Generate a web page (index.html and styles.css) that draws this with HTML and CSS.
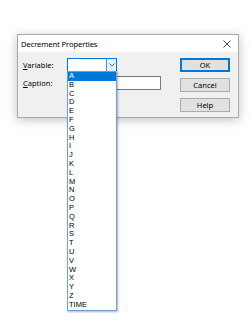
FILE: index.html
```html
<!DOCTYPE html>
<html lang="en">
<head>
    <meta charset="UTF-8">
    <title>Decrement Properties</title>
    <link rel="stylesheet" href="styles.css">
</head>
<body>
    <div class="dialog">
        <div class="titlebar">
            <span class="title">Decrement Properties</span>
            <svg class="close" width="8" height="8" viewBox="0 0 8 8">
                <path d="M0.5 0.5 L7.5 7.5 M7.5 0.5 L0.5 7.5" stroke="#333" stroke-width="0.9" fill="none"/>
            </svg>
        </div>
        <div class="content">
            <div class="form">
                <label class="label"><u>V</u>ariable:</label>
                <div class="combo">
                    <div class="combo-field"></div>
                    <div class="combo-btn">
                        <svg width="6" height="4" viewBox="0 0 6 4">
                            <path d="M0.5 0.5 L3 3 L5.5 0.5" stroke="#555" stroke-width="0.9" fill="none"/>
                        </svg>
                    </div>
                </div>
                <label class="label"><u>C</u>aption:</label>
                <div class="textbox"></div>
            </div>
            <div class="buttons">
                <button class="btn default">OK</button>
                <button class="btn">Cancel</button>
                <button class="btn">Help</button>
            </div>
        </div>
    </div>

    <!-- open list of the Variable combo box -->
    <div class="dropdown" id="dropdown"></div>

    <script>
        // Variables: A..Z plus TIME
        const letters = "ABCDEFGHIJKLMNOPQRSTUVWXYZ".split("");
        letters.push("TIME");

        const list = document.getElementById('dropdown');
        letters.forEach(function (name, i) {
            const item = document.createElement('div');
            item.className = i === 0 ? 'item selected' : 'item';
            item.innerText = name;
            list.appendChild(item);
        });
    </script>
</body>
</html>
```

FILE: styles.css
```css
* {
    box-sizing: border-box;
    margin: 0;
    padding: 0;
}

html, body {
    height: 100%;
}

body {
    position: relative;
    background-color: #fff;
    font-family: "Noto Sans", "Open Sans", sans-serif;
    font-size: 8px;
    color: #000;
    padding: 34px 0 0 17px;
}

.dialog {
    width: 222px;
    height: 84px;
    border: 1px solid #a9a9a9;
    background-color: #f0f0f0;
    box-shadow: 0 2px 10px rgba(0, 0, 0, 0.25);
    display: flex;
    flex-direction: column;
}

.titlebar {
    height: 17px;
    background-color: #fff;
    display: flex;
    align-items: center;
    justify-content: space-between;
    padding: 0 7px 0 3px;
}

.title {
    font-size: 7.6px;
    letter-spacing: -0.1px;
}

.content {
    flex-grow: 1;
    display: flex;
    padding: 6px 8px 0 5px;
}

.form {
    display: grid;
    grid-template-columns: 44px auto;
    grid-template-rows: 14px 14px;
    row-gap: 4px;
    align-items: center;
    align-self: flex-start;
}

.label {
    font-size: 7.5px;
}

.combo {
    width: 50px;
    height: 14px;
    display: flex;
    border: 1px solid #0078d7;
    background-color: #fff;
}

.combo-field {
    flex-grow: 1;
}

.combo-btn {
    width: 10px;
    background-color: #e5f1fb;
    border-left: 1px solid #3c94e0;
    display: flex;
    align-items: center;
    justify-content: center;
}

.dropdown {
    position: absolute;
    top: 71px;
    left: 67px;
    width: 50px;
    border: 1px solid #6f9fd8;
    background-color: #fff;
    box-shadow: 1px 1px 2px rgba(0, 0, 0, 0.3);
    z-index: 10;
}

.item {
    height: 8.8px;
    line-height: 8.8px;
    padding-left: 1px;
    font-family: "Liberation Sans", sans-serif;
    font-size: 7.5px;
}

.item.selected {
    background-color: #0078d7;
    color: #fff;
}

.textbox {
    width: 94px;
    height: 14px;
    background-color: #fff;
    border: 1px solid #7a7a7a;
}

.buttons {
    margin-left: auto;
    display: flex;
    flex-direction: column;
    gap: 6px;
}

.btn {
    width: 50px;
    height: 14px;
    background-color: #e1e1e1;
    border: 1px solid #adadad;
    font-family: "Noto Sans", "Open Sans", sans-serif;
    font-size: 7.5px;
    color: #000;
}

.btn.default {
    border: 2px solid #0078d7;
}
```
